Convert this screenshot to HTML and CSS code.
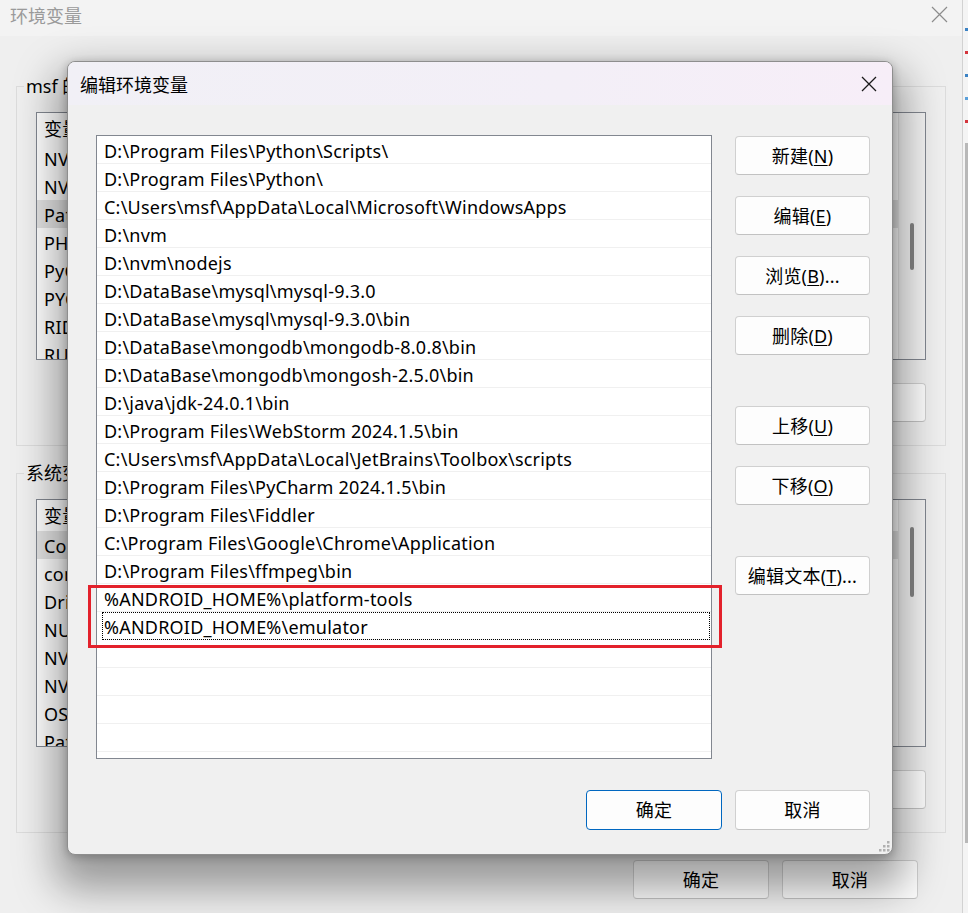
FILE: index.html
```html
<!DOCTYPE html>
<html lang="zh-CN">
<head>
<meta charset="utf-8">
<title>编辑环境变量</title>
<link rel="stylesheet" href="styles.css">
</head>
<body>
<div class="desktop">
  <div class="main-window">
    <div class="main-title">
      <span>环境变量</span>
      <svg class="main-close" width="17" height="17" viewBox="0 0 17 17"><path d="M1 1 L16 16 M16 1 L1 16" stroke="#8c8c8c" stroke-width="1.2" fill="none"/></svg>
    </div>
    <div class="main-body">
      <fieldset class="group">
        <legend>msf 的用户变量(<u>U</u>)</legend>
        <div class="var-list">
          <div class="var-table">
            <div class="var-row head"><span class="c1">变量</span><span class="c2">值</span></div>
            <div class="var-row"><span class="c1">NVM_HOME</span><span class="c2">D:\nvm</span></div>
            <div class="var-row"><span class="c1">NVM_SYMLINK</span><span class="c2">D:\nvm\nodejs</span></div>
            <div class="var-row sel"><span class="c1">Path</span><span class="c2">D:\Program Files\Python\Scripts\</span></div>
            <div class="var-row"><span class="c1">PHPSTORM</span><span class="c2">D:\PhpStorm\bin</span></div>
            <div class="var-row"><span class="c1">PyCharm</span><span class="c2">D:\Program Files\PyCharm\bin</span></div>
            <div class="var-row"><span class="c1">PYCHARM</span><span class="c2">D:\PyCharm\bin</span></div>
            <div class="var-row"><span class="c1">RIDER</span><span class="c2">D:\Rider\bin</span></div>
            <div class="var-row"><span class="c1">RUBYMINE</span><span class="c2">D:\RubyMine\bin</span></div>
          </div>
          <div class="scroll"><div class="thumb thumb-user"></div></div>
        </div>
        <div class="group-buttons">
          <button class="btn">新建(<u>N</u>)...</button>
          <button class="btn">编辑(<u>E</u>)...</button>
          <button class="btn">删除(<u>D</u>)</button>
        </div>
      </fieldset>
      <fieldset class="group group-sys">
        <legend>系统变量(<u>S</u>)</legend>
        <div class="var-list">
          <div class="var-table">
            <div class="var-row head"><span class="c1">变量</span><span class="c2">值</span></div>
            <div class="var-row sel"><span class="c1">ComSpec</span><span class="c2">C:\Windows\system32\cmd.exe</span></div>
            <div class="var-row"><span class="c1">configsetroot</span><span class="c2">C:\Windows\ConfigSetRoot</span></div>
            <div class="var-row"><span class="c1">DriverData</span><span class="c2">C:\Windows\System32\Drivers\DriverData</span></div>
            <div class="var-row"><span class="c1">NUMBER_OF_PROCESSORS</span><span class="c2">16</span></div>
            <div class="var-row"><span class="c1">NVM_HOME</span><span class="c2">D:\nvm</span></div>
            <div class="var-row"><span class="c1">NVM_SYMLINK</span><span class="c2">D:\nvm\nodejs</span></div>
            <div class="var-row"><span class="c1">OS</span><span class="c2">Windows_NT</span></div>
            <div class="var-row"><span class="c1">Path</span><span class="c2">C:\Windows\system32</span></div>
          </div>
          <div class="scroll"><div class="thumb thumb-sys"></div></div>
        </div>
        <div class="group-buttons">
          <button class="btn">新建(<u>W</u>)...</button>
          <button class="btn">编辑(<u>I</u>)...</button>
          <button class="btn">删除(<u>L</u>)</button>
        </div>
      </fieldset>
      <div class="main-footer">
        <button class="btn btn-main">确定</button>
        <button class="btn btn-main">取消</button>
      </div>
    </div>
  </div>
  <div class="desk-strip">
    <i class="mark blue"></i><i class="mark red"></i><i class="mark blue"></i><i class="mark blue2"></i><i class="mark red"></i><i class="mark dark"></i>
  </div>

  <div class="dialog">
    <div class="dlg-title">
      <span>编辑环境变量</span>
      <svg class="dlg-close" width="16" height="16" viewBox="0 0 16 16"><path d="M1 1 L15 15 M15 1 L1 15" stroke="#1a1a1a" stroke-width="1.3" fill="none"/></svg>
    </div>
    <div class="dlg-body">
      <div class="path-list">
        <div class="path-row">D:\Program Files\Python\Scripts\</div>
        <div class="path-row">D:\Program Files\Python\</div>
        <div class="path-row">C:\Users\msf\AppData\Local\Microsoft\WindowsApps</div>
        <div class="path-row">D:\nvm</div>
        <div class="path-row">D:\nvm\nodejs</div>
        <div class="path-row">D:\DataBase\mysql\mysql-9.3.0</div>
        <div class="path-row">D:\DataBase\mysql\mysql-9.3.0\bin</div>
        <div class="path-row">D:\DataBase\mongodb\mongodb-8.0.8\bin</div>
        <div class="path-row">D:\DataBase\mongodb\mongosh-2.5.0\bin</div>
        <div class="path-row">D:\java\jdk-24.0.1\bin</div>
        <div class="path-row">D:\Program Files\WebStorm 2024.1.5\bin</div>
        <div class="path-row">C:\Users\msf\AppData\Local\JetBrains\Toolbox\scripts</div>
        <div class="path-row">D:\Program Files\PyCharm 2024.1.5\bin</div>
        <div class="path-row">D:\Program Files\Fiddler</div>
        <div class="path-row">C:\Program Files\Google\Chrome\Application</div>
        <div class="path-row">D:\Program Files\ffmpeg\bin</div>
        <div class="path-row">%ANDROID_HOME%\platform-tools</div>
        <div class="path-row focus">%ANDROID_HOME%\emulator</div>
        <div class="path-row"></div>
        <div class="path-row"></div>
        <div class="path-row"></div>
        <div class="path-row"></div>
        <div class="path-row"></div>
      </div>
      <div class="side-buttons">
        <button class="btn">新建(<u>N</u>)</button>
        <button class="btn">编辑(<u>E</u>)</button>
        <button class="btn">浏览(<u>B</u>)...</button>
        <button class="btn">删除(<u>D</u>)</button>
        <button class="btn spaced">上移(<u>U</u>)</button>
        <button class="btn">下移(<u>O</u>)</button>
        <button class="btn spaced">编辑文本(<u>T</u>)...</button>
      </div>
    </div>
    <div class="dlg-footer">
      <button class="btn btn-dlg btn-default">确定</button>
      <button class="btn btn-dlg">取消</button>
    </div>
    <svg class="grip" width="12" height="12" viewBox="0 0 12 12">
      <rect x="9" y="1" width="2.5" height="2.5" fill="#b0b0b0"/>
      <rect x="5" y="5" width="2.5" height="2.5" fill="#b0b0b0"/>
      <rect x="9" y="5" width="2.5" height="2.5" fill="#b0b0b0"/>
      <rect x="1" y="9" width="2.5" height="2.5" fill="#b0b0b0"/>
      <rect x="5" y="9" width="2.5" height="2.5" fill="#b0b0b0"/>
      <rect x="9" y="9" width="2.5" height="2.5" fill="#b0b0b0"/>
    </svg>
  </div>

  <div class="annotation"></div>
</div>
</body>
</html>
```

FILE: styles.css
```css
* { box-sizing: border-box; }
html, body { margin: 0; padding: 0; }
body {
  width: 968px;
  height: 913px;
  overflow: hidden;
  background: #ececec;
  font-family: "Noto Sans", "Noto Sans CJK SC", sans-serif;
  font-size: 18px;
  color: #000;
}
u { text-decoration: underline; text-underline-offset: 2px; }

.desktop {
  position: relative;
  width: 968px;
  height: 913px;
  display: flex;
}

/* ---------- background window ---------- */
.main-window {
  flex: none;
  width: 963px;
  height: 913px;
  background: #efefef;
  border-right: 1px solid #d2d2d2;
  display: flex;
  flex-direction: column;
}
.main-title {
  height: 36px;
  flex: none;
  background: #f3f3f3;
  display: flex;
  align-items: center;
  justify-content: space-between;
  padding: 0 14px 6px 10px;
  color: #9a9a9a;
  font-size: 18px;
}
.main-close { margin-top: -2px; }
.main-body {
  padding: 38px 16px 0 16px;
  display: flex;
  flex-direction: column;
}
.group {
  margin: 0;
  width: 930px;
  border: 1px solid #dcdcdc;
  padding: 14px 19px 23px 19px;
  min-width: 0;
}
.group-sys { margin-top: 15px; }
.group legend {
  margin-left: -12px;
  padding: 0 2px;
  line-height: 24px;
  font-size: 18px;
  color: #000;
}
.var-list {
  height: 248px;
  border: 1px solid #828790;
  background: #fff;
  display: flex;
  overflow: hidden;
}
.var-table { flex: 1; min-width: 0; }
.var-row {
  height: 28px;
  line-height: 30px;
  display: flex;
  white-space: nowrap;
  overflow: hidden;
  letter-spacing: 0.2px;
}
.var-row.head { height: 31px; line-height: 33px; }
.var-row.sel { background: #e3e3e3; }
.var-row .c1 { width: 260px; padding-left: 7px; overflow: hidden; }
.var-row .c2 { flex: 1; padding-left: 7px; overflow: hidden; }
.scroll {
  width: 27px;
  flex: none;
  background: #f4f4f4;
  border-left: 1px solid #e6e6e6;
  display: flex;
  justify-content: center;
}
.thumb {
  width: 4px;
  border-radius: 2px;
  background: #858585;
}
.thumb-user { margin-top: 110px; height: 47px; }
.thumb-sys { margin-top: 27px; height: 70px; }
.group-buttons {
  margin-top: 23px;
  display: flex;
  justify-content: flex-end;
  gap: 14px;
}
.group-buttons .btn { width: 136px; height: 39px; }
.main-footer {
  margin-top: 27px;
  display: flex;
  justify-content: flex-end;
  gap: 13px;
  padding-right: 28px;
}
.btn-main { width: 136px; height: 39px; }

.btn {
  font-family: inherit;
  font-size: 18px;
  color: #000;
  background: #fdfdfd;
  border: 1px solid #d0d0d0;
  border-bottom-color: #c2c2c2;
  border-radius: 4px;
  padding: 0;
  line-height: 1;
  letter-spacing: 0.2px;
  display: flex;
  align-items: center;
  justify-content: center;
}

/* ---------- desktop strip ---------- */
.desk-strip {
  flex: 1;
  display: flex;
  flex-direction: column;
  align-items: flex-end;
  padding-top: 28px;
  gap: 20px;
  background: #f4f4f4;
}
.mark { display: block; width: 3px; height: 3px; }
.mark.blue { background: #3b82c4; }
.mark.blue2 { background: #5aa0da; }
.mark.red { background: #d4343c; }
.mark.dark { width: 3px; height: 700px; background: #b8b8b8; }

/* ---------- dialog ---------- */
.dialog {
  position: absolute;
  left: 67px;
  top: 61px;
  width: 826px;
  height: 794px;
  background: #f0f0f0;
  border: 1px solid #8e8e8e;
  border-radius: 8px;
  overflow: hidden;
  box-shadow: 0 22px 40px 12px rgba(0, 0, 0, 0.36), 0 2px 10px rgba(0, 0, 0, 0.24);
  display: flex;
  flex-direction: column;
}
.dlg-title {
  height: 43px;
  flex: none;
  background: linear-gradient(90deg, #f1f0f6 0%, #f3eff7 60%, #f7eef8 100%);
  display: flex;
  align-items: center;
  justify-content: space-between;
  padding: 0 15px 0 12px;
  font-size: 18px;
}
.dlg-body {
  padding: 30px 22px 0 28px;
  display: flex;
  gap: 23px;
}
.path-list {
  width: 616px;
  height: 624px;
  background: #fff;
  border: 1px solid #828790;
  overflow: hidden;
}
.path-row {
  height: 28px;
  line-height: 30px;
  padding-left: 7px;
  border-bottom: 1px solid #f0f0f0;
  white-space: nowrap;
  overflow: hidden;
  letter-spacing: 0.22px;
}
.path-row.focus {
  margin: 0 1px 0 5px;
  padding-left: 2px;
  outline: 1px dotted #000;
  outline-offset: -1px;
}
.side-buttons {
  display: flex;
  flex-direction: column;
  gap: 21px;
  padding-top: 1px;
}
.side-buttons .btn { width: 135px; height: 39px; }
.side-buttons .btn.spaced { margin-top: 30px; }
.dlg-footer {
  margin-top: 31px;
  display: flex;
  justify-content: flex-end;
  gap: 13px;
  padding-right: 22px;
}
.btn-dlg { width: 136px; height: 40px; }
.btn-dlg + .btn-dlg { width: 135px; }
.btn-default { border: 1px solid #0067c0; }
.grip {
  position: absolute;
  right: 2px;
  bottom: 2px;
}

/* ---------- annotation ---------- */
.annotation {
  position: absolute;
  left: 88px;
  top: 585px;
  width: 634px;
  height: 63px;
  border: 3px solid #e3212b;
}
```
